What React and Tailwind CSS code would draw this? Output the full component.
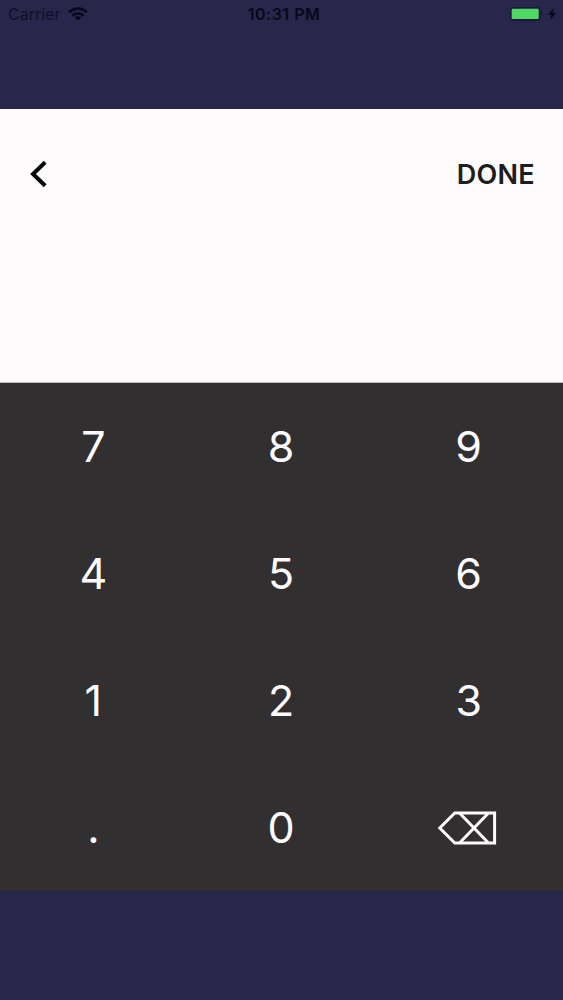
const KEYS = ['7', '8', '9', '4', '5', '6', '1', '2', '3', '.', '0', 'delete'];

function WifiIcon() {
    return (
        <svg width="20" height="14" viewBox="0 0 20 14" fill="none" stroke="#08081c" strokeWidth="2.8">
            <path d="M1.2 5.2C6 0.3 14 0.3 18.8 5.2" />
            <path d="M4.3 8.7C7.5 5.5 12.5 5.5 15.7 8.7" />
            <path d="M10 13.6L6.7 10.6C8.6 8.9 11.4 8.9 13.3 10.6Z" fill="#08081c" stroke="none" />
        </svg>
    );
}

function BatteryIcon() {
    return (
        <svg width="34" height="14" viewBox="0 0 34 14" fill="none">
            <rect x="0.7" y="0.9" width="29.2" height="12.2" rx="2.5" stroke="#17173a" strokeWidth="1.2" />
            <rect x="1.7" y="1.7" width="27" height="10.3" rx="1" fill="#51d765" />
            <path d="M31.2 4.6C32.8 5.4 32.8 8.6 31.2 9.4Z" fill="#17173a" />
        </svg>
    );
}

function BoltIcon() {
    return (
        <svg width="9" height="12" viewBox="0 0 9 12" fill="#08081c">
            <path d="M5.7 0L0 6.9H3.4L2.1 12L8.2 4.8H4.6Z" />
        </svg>
    );
}

function BackIcon() {
    return (
        <svg width="19" height="28" viewBox="0 0 19 28" fill="none" stroke="#080808" strokeWidth="4">
            <path d="M16.2 2.2L4 14L16.2 25.8" />
        </svg>
    );
}

function DeleteIcon() {
    return (
        <svg width="60" height="34" viewBox="0 0 60 34" fill="none" stroke="#fdfbfd" strokeWidth="3" className="mr-[3px]">
            <path d="M17.8 1.9H57.6V32.1H17.8L2.8 17Z" />
            <path d="M22.5 2L51.5 32M51.5 2L22.5 32" />
        </svg>
    );
}

function StatusBar() {
    return (
        <div className="grid h-7 grid-cols-3 items-center pl-2 pr-1.5 text-base leading-7 text-[#08081c]">
            <div className="flex items-center gap-2 text-[#101029]">
                <span>Carrier</span>
                <WifiIcon />
            </div>
            <div className="pl-[3px] text-center font-semibold tracking-[0.5px]">10:31 PM</div>
            <div className="flex items-center justify-end gap-1">
                <BatteryIcon />
                <BoltIcon />
            </div>
        </div>
    );
}

export default function App() {
    return (
        <div className="flex h-[1000px] w-[563px] flex-col bg-[#28264b] font-[Inter,sans-serif]">
            <header className="h-[109px]">
                <StatusBar />
            </header>

            <main className="h-[274px] border-b border-[#bdbbbd] bg-[#fcfafb] pt-[45px]">
                <div className="flex h-10 items-center justify-between pl-[29px] pr-7">
                    <button aria-label="Back">
                        <BackIcon />
                    </button>
                    <button className="pt-0.5 text-[27px] font-semibold tracking-[0.3px] text-[#1e1c1e]">DONE</button>
                </div>
            </main>

            <div className="grid h-[508px] grid-cols-3 grid-rows-4 bg-[#322f31]">
                {KEYS.map((key) => (
                    <button key={key} aria-label={key} className="flex items-center justify-center pr-px text-[43px] leading-none text-[#fdfbfd]">
                        {key === 'delete' ? <DeleteIcon /> : key}
                    </button>
                ))}
            </div>
        </div>
    );
}
